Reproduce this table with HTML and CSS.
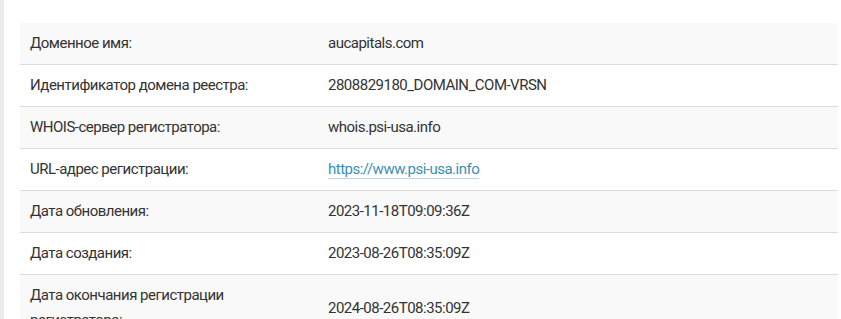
FILE: index.html
```html
<!DOCTYPE html>
<html lang="ru">
<head>
  <meta charset="UTF-8" />
  <meta name="viewport" content="width=device-width, initial-scale=1.0"/>
  <title>WHOIS aucapitals.com</title>
  <link rel="stylesheet" href="styles.css">
</head>
<body>
  <div class="page">
    <table class="whois">
      <tr><td class="label">Доменное имя:</td><td>aucapitals.com</td></tr>
      <tr><td class="label">Идентификатор домена реестра:</td><td>2808829180_DOMAIN_COM-VRSN</td></tr>
      <tr><td class="label">WHOIS-сервер регистратора:</td><td>whois.psi-usa.info</td></tr>
      <tr><td class="label">URL-адрес регистрации:</td><td><a href="#">https://www.psi-usa.info</a></td></tr>
      <tr><td class="label">Дата обновления:</td><td>2023-11-18T09:09:36Z</td></tr>
      <tr><td class="label">Дата создания:</td><td>2023-08-26T08:35:09Z</td></tr>
      <tr><td class="label">Дата окончания регистрации регистратора:</td><td>2024-08-26T08:35:09Z</td></tr>
    </table>
  </div>
</body>
</html>
```

FILE: styles.css
```css
* { box-sizing: border-box; }
body {
  margin: 0;
  background: #fff;
  font-family: Roboto, "Noto Sans", sans-serif;
  color: #333;
}
.page {
  border-left: 4px solid #ebebeb;
  padding: 23px 3px 0 16px;
  min-height: 100vh;
}
.whois {
  width: 100%;
  border-collapse: collapse;
  font-size: 15px;
  letter-spacing: -0.5px;
}
.whois td {
  padding: 8px 10px;
  line-height: 25px;
  border-bottom: 1px solid #dcdcdc;
  vertical-align: middle;
}
.whois tr:nth-child(odd) td {
  background: #f9f9f9;
}
.whois .label {
  width: 298px;
}
.whois a {
  color: #3b8fb6;
  text-decoration: none;
  border-bottom: 1px solid #bcdbe8;
}
```
